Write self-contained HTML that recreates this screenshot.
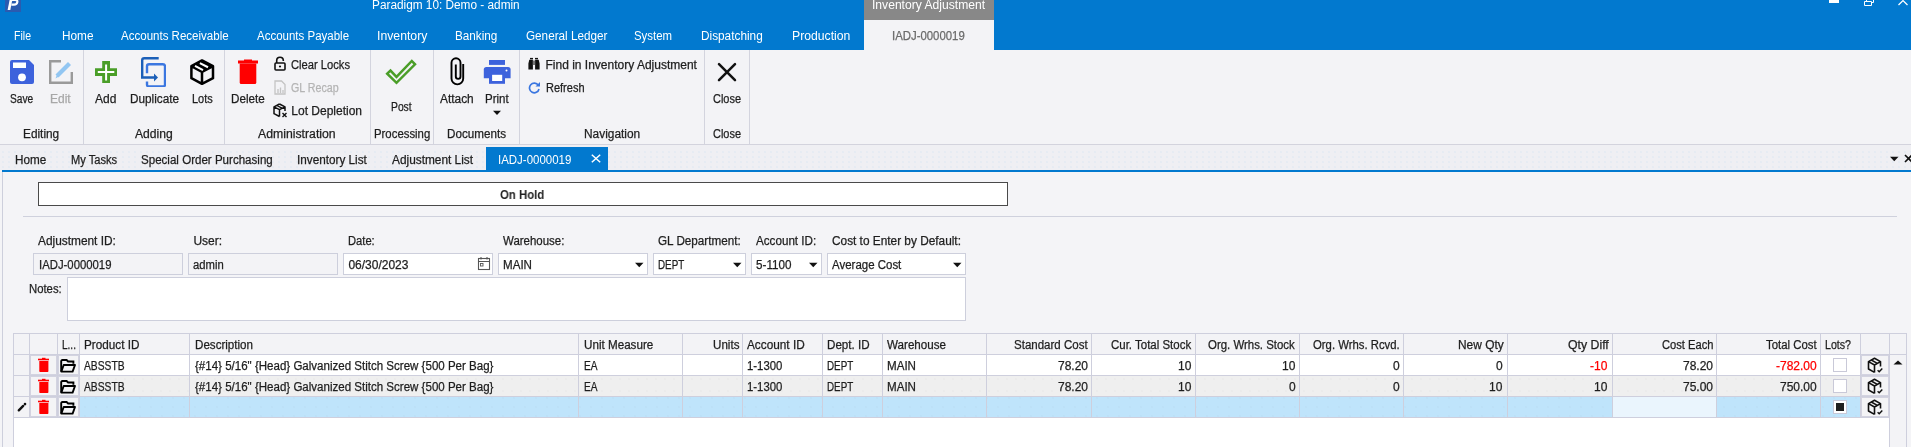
<!DOCTYPE html><html><head><meta charset="utf-8"><style>
html,body{margin:0;padding:0;width:1911px;height:447px;overflow:hidden;background:#f4f4f7;}
body{position:relative;font-family:"Liberation Sans",sans-serif;}
.t{position:absolute;font-size:12px;line-height:14px;white-space:nowrap;}
.t.d{-webkit-text-stroke:0.25px currentColor;}
#w{position:absolute;left:0;top:0;width:1911px;height:447px;overflow:hidden;will-change:transform;}
</style></head><body><div id="w">
<div style="position:absolute;left:0px;top:0px;width:1911px;height:50px;background:#0279cf"></div>
<div style="position:absolute;left:5px;top:0px;width:16px;height:12px;background:#2a5bb0"></div>
<svg style="position:absolute;left:5px;top:0px" width="16" height="12" viewBox="0 0 16 12"><path d="M2.6 10H5.3L7.3 0H4.6Z" fill="#fff"/><path d="M6 -0.2H10Q12.7 -0.2 12.3 2.1Q11.9 4.6 9 4.6H6.4" fill="none" stroke="#fff" stroke-width="2.2"/></svg>
<div class="t" style="left:371.80px;top:-2px;color:#fff;transform:scaleX(0.9840);transform-origin:0 0;">Paradigm 10: Demo - admin</div>
<div style="position:absolute;left:864px;top:0px;width:130px;height:20px;background:#888888"></div>
<div class="t" style="left:872.00px;top:-2px;color:#fff;transform:scaleX(1.0088);transform-origin:0 0;">Inventory Adjustment</div>
<div style="position:absolute;left:864px;top:20px;width:130px;height:30px;background:#f3f3f6"></div>
<div class="t d" style="left:892.00px;top:29px;color:#6b6b6b;transform:scaleX(0.9481);transform-origin:0 0;">IADJ-0000019</div>
<div style="position:absolute;left:1829px;top:0px;width:10px;height:3px;background:#fff"></div>
<svg style="position:absolute;left:1863px;top:0px" width="12" height="7" viewBox="0 0 12 7"><path d="M1.5 1.5h7v4h-7z M3.5 1.5V-1.5H10.5V2.5H8.5" fill="none" stroke="#fff" stroke-width="1"/></svg>
<svg style="position:absolute;left:1897px;top:0px" width="12" height="6" viewBox="0 0 12 6"><path d="M1.5 5L6 0.6L10.5 5" fill="none" stroke="#fff" stroke-width="1.3"/></svg>
<div class="t" style="left:14.40px;top:29px;color:#fff;transform:scaleX(0.8800);transform-origin:0 0;">File</div>
<div class="t" style="left:61.50px;top:29px;color:#fff;transform:scaleX(0.9844);transform-origin:0 0;">Home</div>
<div class="t" style="left:121.00px;top:29px;color:#fff;transform:scaleX(0.9607);transform-origin:0 0;">Accounts Receivable</div>
<div class="t" style="left:257.00px;top:29px;color:#fff;transform:scaleX(0.9583);transform-origin:0 0;">Accounts Payable</div>
<div class="t" style="left:377.00px;top:29px;color:#fff;transform:scaleX(1.0204);transform-origin:0 0;">Inventory</div>
<div class="t" style="left:455.00px;top:29px;color:#fff;transform:scaleX(0.9767);transform-origin:0 0;">Banking</div>
<div class="t" style="left:526.00px;top:29px;color:#fff;transform:scaleX(0.9759);transform-origin:0 0;">General Ledger</div>
<div class="t" style="left:634.00px;top:29px;color:#fff;transform:scaleX(0.9500);transform-origin:0 0;">System</div>
<div class="t" style="left:701.00px;top:29px;color:#fff;transform:scaleX(0.9841);transform-origin:0 0;">Dispatching</div>
<div class="t" style="left:792.00px;top:29px;color:#fff;transform:scaleX(1.0175);transform-origin:0 0;">Production</div>
<div style="position:absolute;left:0px;top:50px;width:1911px;height:95px;background:#f3f3f6"></div>
<div style="position:absolute;left:0px;top:144px;width:1911px;height:1px;background:#d3d3dd"></div>
<div style="position:absolute;left:83px;top:50px;width:1px;height:94px;background:#d3d4de"></div>
<div style="position:absolute;left:224px;top:50px;width:1px;height:94px;background:#d3d4de"></div>
<div style="position:absolute;left:370px;top:50px;width:1px;height:94px;background:#d3d4de"></div>
<div style="position:absolute;left:433px;top:50px;width:1px;height:94px;background:#d3d4de"></div>
<div style="position:absolute;left:519px;top:50px;width:1px;height:94px;background:#d3d4de"></div>
<div style="position:absolute;left:704px;top:50px;width:1px;height:94px;background:#d3d4de"></div>
<div style="position:absolute;left:749px;top:50px;width:1px;height:94px;background:#d3d4de"></div>
<svg style="position:absolute;left:10px;top:60px" width="24" height="24" viewBox="0 0 24 24"><path d="M2 0H19L24 5V22Q24 24 22 24H2Q0 24 0 22V2Q0 0 2 0Z" fill="#3d62dc"/><rect x="3" y="2.5" width="13" height="5.5" fill="#fff"/><circle cx="12" cy="17.3" r="3.9" fill="#fff"/></svg>
<svg style="position:absolute;left:49px;top:60px" width="24" height="24" viewBox="0 0 24 24"><path d="M12 1.2H1.2V22.8H22.8V12" fill="none" stroke="#9a9a9a" stroke-width="2.4"/><path d="M8 16L20.5 3.5" stroke="#92c6f2" stroke-width="4.2" fill="none"/><path d="M6.5 18.5L8 14.5L10 16.5Z" fill="#92c6f2"/></svg>
<svg style="position:absolute;left:95px;top:61px" width="22" height="22" viewBox="0 0 22 22"><path d="M7.2 0H15V7.2H22V15H15V22H7.2V15H0V7.2H7.2Z" fill="#4a9e28"/><path d="M11.1 3.4V19.5M2.8 11.1H19.3" stroke="#fff" stroke-width="2" fill="none"/></svg>
<svg style="position:absolute;left:140px;top:57px" width="26" height="30" viewBox="0 0 26 30"><path d="M18.7 1.2H4.2Q2.2 1.2 2.2 3.2V20.5H16" fill="none" stroke="#1b5fb8" stroke-width="2.4"/><path d="M14 16.5L18 20.5L14 24.5Z" fill="#1b5fb8"/><path d="M7 16.2V9.3Q7 7.2 9.1 7.2H22.9Q25 7.2 25 9.3V27.4Q25 29.5 22.9 29.5H9.1Q7 29.5 7 27.4V24.5" fill="none" stroke="#3a76e0" stroke-width="2.4"/></svg>
<svg style="position:absolute;left:190px;top:58px" width="25" height="28" viewBox="0 0 25 28"><path d="M12 2.4L23 8.2L12 14L1.4 8.2Z" fill="#000"/><path d="M12 2.4L23 8.2V20.2L12 25.8L1.4 20.2V8.2Z M1.4 8.2L12 14L23 8.2 M12 14V25.8" fill="none" stroke="#000" stroke-width="2.5" stroke-linejoin="round"/><path d="M5 7.9L13 12.1 M9.9 5.1L18 9.3" stroke="#fff" stroke-width="2.1"/></svg>
<svg style="position:absolute;left:238px;top:59px" width="20" height="26" viewBox="0 0 20 26"><rect x="6" y="0.5" width="8" height="2" fill="#ff0000"/><rect x="0" y="1.5" width="20" height="3" fill="#ff0000"/><path d="M1.7 4.5H18.3V23.5Q18.3 25 16.8 25H3.2Q1.7 25 1.7 23.5Z" fill="#ff0000"/></svg>
<svg style="position:absolute;left:274px;top:56px" width="12" height="15" viewBox="0 0 12 15"><path d="M2.7 7V4.5Q2.7 1.2 6 1.2Q9.3 1.2 9.3 4.5V5" fill="none" stroke="#111" stroke-width="1.6"/><rect x="1" y="7" width="10" height="7" rx="1" fill="none" stroke="#111" stroke-width="1.6"/><circle cx="6" cy="10.5" r="1.1" fill="#111"/></svg>
<svg style="position:absolute;left:274px;top:80px" width="12" height="15" viewBox="0 0 12 15"><path d="M1 1H7.5L11 4.5V14H1Z" fill="none" stroke="#c4c4c4" stroke-width="1.3"/><path d="M4 13V9M6.5 13V7.5M9 13V10" stroke="#c4c4c4" stroke-width="1.3"/></svg>
<svg style="position:absolute;left:273px;top:103px" width="15" height="15" viewBox="0 0 15 15"><path d="M6.5 1L12 3.8V8M6.5 13.5L1 10.7V3.8L6.5 1M1 3.8L6.5 6.6L12 3.8M6.5 6.6V13.5" fill="none" stroke="#111" stroke-width="1.5" stroke-linejoin="round"/><path d="M3.8 2.5L9 5.2" stroke="#111" stroke-width="1.4"/><path d="M9.5 10L13.5 14M13.5 10L9.5 14" stroke="#111" stroke-width="1.4"/></svg>
<svg style="position:absolute;left:385px;top:58px" width="33" height="28" viewBox="0 0 33 28"><path d="M2.2 15.7L5.5 12.6L11.5 18.9L26.8 3L30 6.3L11.5 24.8Z" fill="none" stroke="#4a9e28" stroke-width="2.5" stroke-linejoin="miter"/></svg>
<svg style="position:absolute;left:449px;top:57px" width="17" height="30" viewBox="0 0 17 30"><path d="M6.8 7.5V19.5A2.35 2.35 0 0 0 11.5 19.5V5.8A4.5 4.5 0 0 0 2.5 5.8V21.5A5.85 5.85 0 0 0 14.2 21.5V7" fill="none" stroke="#000" stroke-width="1.9"/></svg>
<svg style="position:absolute;left:483px;top:59px" width="28" height="26" viewBox="0 0 28 26"><rect x="6" y="1" width="16" height="4.9" fill="#3d62dc"/><path d="M0.8 10.5Q0.8 7.9 3.4 7.9H25Q27.6 7.9 27.6 10.5V19.2H0.8Z" fill="#3d62dc"/><rect x="6" y="14" width="16" height="10.8" fill="#3d62dc"/><rect x="9.1" y="15.8" width="10.1" height="6.2" fill="#fff"/><circle cx="23.5" cy="11.5" r="1" fill="#fff"/></svg>
<svg style="position:absolute;left:492px;top:110px" width="10" height="6" viewBox="0 0 10 6"><path d="M1 0.8H9L5 5Z" fill="#111"/></svg>
<svg style="position:absolute;left:528px;top:57px" width="12" height="13" viewBox="0 0 12 13"><rect x="2" y="0.9" width="3" height="1.4" fill="#111"/><rect x="7" y="0.9" width="3" height="1.4" fill="#111"/><path d="M1.3 2.8H4.9V12.6H0.4V6.5Z M7.1 2.8H10.7L11.6 6.5V12.6H7.1Z" fill="#111"/><rect x="4.9" y="3.5" width="2.2" height="4.5" fill="#777"/></svg>
<svg style="position:absolute;left:528px;top:81px" width="13" height="13" viewBox="0 0 13 13"><path d="M10.3 4.3A4.8 4.8 0 1 0 11 8" fill="none" stroke="#3a76e0" stroke-width="1.7"/><path d="M7.5 5.5H12V1Z" fill="#3a76e0"/></svg>
<svg style="position:absolute;left:716px;top:61px" width="22" height="22" viewBox="0 0 22 22"><path d="M3 3.2L19 19.2M19 3.2L3 19.2" stroke="#111" stroke-width="2.5" stroke-linecap="round"/></svg>
<div class="t d" style="left:10.30px;top:92px;color:#1e1e1e;transform:scaleX(0.8464);transform-origin:0 0;">Save</div>
<div class="t d" style="left:50.00px;top:92px;color:#a8a8a8;">Edit</div>
<div class="t d" style="left:95.00px;top:92px;color:#1e1e1e;">Add</div>
<div class="t d" style="left:129.50px;top:92px;color:#1e1e1e;transform:scaleX(0.9820);transform-origin:0 0;">Duplicate</div>
<div class="t d" style="left:191.50px;top:92px;color:#1e1e1e;transform:scaleX(0.9130);transform-origin:0 0;">Lots</div>
<div class="t d" style="left:231.00px;top:92px;color:#1e1e1e;transform:scaleX(0.9714);transform-origin:0 0;">Delete</div>
<div class="t d" style="left:291.30px;top:58px;color:#1e1e1e;transform:scaleX(0.9317);transform-origin:0 0;">Clear Locks</div>
<div class="t d" style="left:291.30px;top:81px;color:#b4b4b4;transform:scaleX(0.8889);transform-origin:0 0;">GL Recap</div>
<div class="t d" style="left:291.30px;top:104px;color:#1e1e1e;">Lot Depletion</div>
<div class="t d" style="left:390.80px;top:100px;color:#1e1e1e;transform:scaleX(0.8600);transform-origin:0 0;">Post</div>
<div class="t d" style="left:440.30px;top:92px;color:#1e1e1e;transform:scaleX(0.9912);transform-origin:0 0;">Attach</div>
<div class="t d" style="left:485.40px;top:92px;color:#1e1e1e;transform:scaleX(0.9600);transform-origin:0 0;">Print</div>
<div class="t d" style="left:545.50px;top:58px;color:#1e1e1e;">Find in Inventory Adjustment</div>
<div class="t d" style="left:545.50px;top:81px;color:#1e1e1e;transform:scaleX(0.9167);transform-origin:0 0;">Refresh</div>
<div class="t d" style="left:713.00px;top:92px;color:#1e1e1e;transform:scaleX(0.9129);transform-origin:0 0;">Close</div>
<div class="t d" style="left:23.00px;top:127px;color:#1e1e1e;transform:scaleX(0.9865);transform-origin:0 0;">Editing</div>
<div class="t d" style="left:134.60px;top:127px;color:#1e1e1e;transform:scaleX(1.0108);transform-origin:0 0;">Adding</div>
<div class="t d" style="left:258.00px;top:127px;color:#1e1e1e;transform:scaleX(1.0211);transform-origin:0 0;">Administration</div>
<div class="t d" style="left:373.60px;top:127px;color:#1e1e1e;transform:scaleX(0.9475);transform-origin:0 0;">Processing</div>
<div class="t d" style="left:446.70px;top:127px;color:#1e1e1e;transform:scaleX(0.9721);transform-origin:0 0;">Documents</div>
<div class="t d" style="left:583.50px;top:127px;color:#1e1e1e;transform:scaleX(0.9912);transform-origin:0 0;">Navigation</div>
<div class="t d" style="left:713.00px;top:127px;color:#1e1e1e;transform:scaleX(0.9129);transform-origin:0 0;">Close</div>
<div style="position:absolute;left:0px;top:145px;width:1911px;height:25px;background:#efeff3"></div>
<div style="position:absolute;left:0px;top:150px;width:1911px;height:19px;background:radial-gradient(circle at 1px 1px,#e2eaf2 0.6px,transparent 0.9px) 2px 1px/6px 5px"></div>
<div style="position:absolute;left:486px;top:147px;width:122px;height:23px;background:#0279cf"></div>
<div class="t d" style="left:14.60px;top:153px;color:#1e1e1e;transform:scaleX(0.9750);transform-origin:0 0;">Home</div>
<div class="t d" style="left:70.50px;top:153px;color:#1e1e1e;transform:scaleX(0.9260);transform-origin:0 0;">My Tasks</div>
<div class="t d" style="left:141.00px;top:153px;color:#1e1e1e;transform:scaleX(0.9635);transform-origin:0 0;">Special Order Purchasing</div>
<div class="t d" style="left:297.40px;top:153px;color:#1e1e1e;transform:scaleX(0.9778);transform-origin:0 0;">Inventory List</div>
<div class="t d" style="left:392.00px;top:153px;color:#1e1e1e;transform:scaleX(0.9880);transform-origin:0 0;">Adjustment List</div>
<div class="t" style="left:498.00px;top:153px;color:#fff;transform:scaleX(0.9558);transform-origin:0 0;">IADJ-0000019</div>
<svg style="position:absolute;left:591px;top:154px" width="10" height="9" viewBox="0 0 10 9"><path d="M0.8 0.8L9.2 8.2M9.2 0.8L0.8 8.2" stroke="#fff" stroke-width="1.5"/></svg>
<svg style="position:absolute;left:1890px;top:156px" width="9" height="6" viewBox="0 0 9 6"><path d="M0 0.8H8.5L4.25 5.2Z" fill="#111"/></svg>
<svg style="position:absolute;left:1904px;top:154px" width="7" height="9" viewBox="0 0 7 9"><path d="M1 1L8 8M8 1L1 8" stroke="#111" stroke-width="1.6"/></svg>
<div style="position:absolute;left:2px;top:170px;width:1909px;height:2px;background:#0279cf"></div>
<div style="position:absolute;left:2px;top:172px;width:1px;height:275px;background:#cdcfdc"></div>
<div style="position:absolute;left:38px;top:182px;width:968px;height:22px;background:#fff;border:1px solid #4a4a4a"></div>
<div class="t" style="left:500.40px;top:188px;color:#1e1e1e;font-weight:bold;transform:scaleX(0.9489);transform-origin:0 0;">On Hold</div>
<div style="position:absolute;left:23px;top:216px;width:1874px;height:1px;background:#cfd1dd"></div>
<div class="t d" style="left:38.40px;top:234px;color:#1e1e1e;transform:scaleX(0.9899);transform-origin:0 0;">Adjustment ID:</div>
<div class="t d" style="left:193.40px;top:234px;color:#1e1e1e;">User:</div>
<div class="t d" style="left:348.40px;top:234px;color:#1e1e1e;transform:scaleX(0.9310);transform-origin:0 0;">Date:</div>
<div class="t d" style="left:503.40px;top:234px;color:#1e1e1e;transform:scaleX(0.9547);transform-origin:0 0;">Warehouse:</div>
<div class="t d" style="left:658.40px;top:234px;color:#1e1e1e;transform:scaleX(0.9741);transform-origin:0 0;">GL Department:</div>
<div class="t d" style="left:756.40px;top:234px;color:#1e1e1e;transform:scaleX(0.9710);transform-origin:0 0;">Account ID:</div>
<div class="t d" style="left:832.10px;top:234px;color:#1e1e1e;transform:scaleX(0.9863);transform-origin:0 0;">Cost to Enter by Default:</div>
<div class="t d" style="left:28.60px;top:282px;color:#1e1e1e;transform:scaleX(0.9429);transform-origin:0 0;">Notes:</div>
<div style="position:absolute;left:33px;top:253px;width:148px;height:20px;background:#f3f3f6;border:1px solid #cdcfdc"></div>
<div style="position:absolute;left:188px;top:253px;width:148px;height:20px;background:#f3f3f6;border:1px solid #cdcfdc"></div>
<div style="position:absolute;left:343px;top:253px;width:148px;height:20px;background:#fff;border:1px solid #cdcfdc"></div>
<div style="position:absolute;left:498px;top:253px;width:148px;height:20px;background:#fff;border:1px solid #cdcfdc"></div>
<div style="position:absolute;left:653px;top:253px;width:91px;height:20px;background:#fff;border:1px solid #cdcfdc"></div>
<div style="position:absolute;left:751px;top:253px;width:69px;height:20px;background:#fff;border:1px solid #cdcfdc"></div>
<div style="position:absolute;left:827px;top:253px;width:137px;height:20px;background:#fff;border:1px solid #cdcfdc"></div>
<div style="position:absolute;left:67px;top:277px;width:897px;height:42px;background:#fff;border:1px solid #cdcfdc"></div>
<div class="t d" style="left:38.60px;top:258px;color:#1e1e1e;transform:scaleX(0.9442);transform-origin:0 0;">IADJ-0000019</div>
<div class="t d" style="left:193.40px;top:258px;color:#1e1e1e;transform:scaleX(0.9394);transform-origin:0 0;">admin</div>
<div class="t d" style="left:348.40px;top:258px;color:#1e1e1e;">06/30/2023</div>
<div class="t d" style="left:503.40px;top:258px;color:#1e1e1e;transform:scaleX(0.9667);transform-origin:0 0;">MAIN</div>
<div class="t d" style="left:658.40px;top:258px;color:#1e1e1e;transform:scaleX(0.8182);transform-origin:0 0;">DEPT</div>
<div class="t d" style="left:756.40px;top:258px;color:#1e1e1e;transform:scaleX(0.9730);transform-origin:0 0;">5-1100</div>
<div class="t d" style="left:832.10px;top:258px;color:#1e1e1e;transform:scaleX(0.9562);transform-origin:0 0;">Average Cost</div>
<svg style="position:absolute;left:477px;top:256px" width="14" height="15" viewBox="0 0 14 15"><rect x="1.5" y="2.5" width="11" height="11" fill="none" stroke="#555" stroke-width="1.1"/><path d="M1.5 5.5H12.5M4 1V3.5M10 1V3.5" stroke="#555" stroke-width="1.1"/><rect x="3.5" y="7.5" width="2.5" height="2.5" fill="none" stroke="#555" stroke-width="0.9"/></svg>
<svg style="position:absolute;left:635px;top:262px" width="9" height="6" viewBox="0 0 9 6"><path d="M0 0.8H8.5L4.25 5.2Z" fill="#111"/></svg>
<svg style="position:absolute;left:733px;top:262px" width="9" height="6" viewBox="0 0 9 6"><path d="M0 0.8H8.5L4.25 5.2Z" fill="#111"/></svg>
<svg style="position:absolute;left:809px;top:262px" width="9" height="6" viewBox="0 0 9 6"><path d="M0 0.8H8.5L4.25 5.2Z" fill="#111"/></svg>
<svg style="position:absolute;left:953px;top:262px" width="9" height="6" viewBox="0 0 9 6"><path d="M0 0.8H8.5L4.25 5.2Z" fill="#111"/></svg>
<div style="position:absolute;left:13px;top:333px;width:1894px;height:114px;background:#fff"></div>
<div style="position:absolute;left:13px;top:333px;width:1894px;height:1px;background:#cecfdd"></div>
<div style="position:absolute;left:13px;top:333px;width:1px;height:114px;background:#cecfdd"></div>
<div style="position:absolute;left:1906px;top:333px;width:1px;height:114px;background:#cecfdd"></div>
<div style="position:absolute;left:1890px;top:355px;width:16px;height:92px;background:#f3f3f6"></div>
<div style="position:absolute;left:14px;top:334px;width:1892px;height:20px;background:#f3f3f6"></div>
<div style="position:absolute;left:14px;top:355px;width:1875px;height:20px;background:#fff"></div>
<div style="position:absolute;left:14px;top:376px;width:1875px;height:20px;background:#efefef radial-gradient(circle at 1px 1px,#e3e3e3 0.5px,transparent 0.8px) 2px 2px/9px 12px"></div>
<div style="position:absolute;left:14px;top:397px;width:1875px;height:20px;background:#bfe4fb radial-gradient(circle at 1px 1px,#b8daf0 0.5px,transparent 0.8px) 4px 9px/11px 9px"></div>
<div style="position:absolute;left:14px;top:355px;width:15px;height:20px;background:#f3f3f6"></div>
<div style="position:absolute;left:14px;top:376px;width:15px;height:20px;background:#f3f3f6"></div>
<div style="position:absolute;left:14px;top:397px;width:15px;height:20px;background:#f3f3f6"></div>
<div style="position:absolute;left:1613px;top:397px;width:103px;height:20px;background:#eaf5fd"></div>
<div style="position:absolute;left:14px;top:354px;width:1892px;height:1px;background:#cecfdd"></div>
<div style="position:absolute;left:14px;top:375px;width:1875px;height:1px;background:#cecfdd"></div>
<div style="position:absolute;left:14px;top:396px;width:1875px;height:1px;background:#cecfdd"></div>
<div style="position:absolute;left:14px;top:417px;width:1875px;height:1px;background:#cecfdd"></div>
<div style="position:absolute;left:29px;top:334px;width:1px;height:84px;background:#cecfdd"></div>
<div style="position:absolute;left:57px;top:334px;width:1px;height:84px;background:#cecfdd"></div>
<div style="position:absolute;left:79px;top:334px;width:1px;height:84px;background:#cecfdd"></div>
<div style="position:absolute;left:189px;top:334px;width:1px;height:84px;background:#cecfdd"></div>
<div style="position:absolute;left:578px;top:334px;width:1px;height:84px;background:#cecfdd"></div>
<div style="position:absolute;left:682px;top:334px;width:1px;height:84px;background:#cecfdd"></div>
<div style="position:absolute;left:742px;top:334px;width:1px;height:84px;background:#cecfdd"></div>
<div style="position:absolute;left:822px;top:334px;width:1px;height:84px;background:#cecfdd"></div>
<div style="position:absolute;left:882px;top:334px;width:1px;height:84px;background:#cecfdd"></div>
<div style="position:absolute;left:986px;top:334px;width:1px;height:84px;background:#cecfdd"></div>
<div style="position:absolute;left:1091px;top:334px;width:1px;height:84px;background:#cecfdd"></div>
<div style="position:absolute;left:1195px;top:334px;width:1px;height:84px;background:#cecfdd"></div>
<div style="position:absolute;left:1299px;top:334px;width:1px;height:84px;background:#cecfdd"></div>
<div style="position:absolute;left:1403px;top:334px;width:1px;height:84px;background:#cecfdd"></div>
<div style="position:absolute;left:1507px;top:334px;width:1px;height:84px;background:#cecfdd"></div>
<div style="position:absolute;left:1612px;top:334px;width:1px;height:84px;background:#cecfdd"></div>
<div style="position:absolute;left:1716px;top:334px;width:1px;height:84px;background:#cecfdd"></div>
<div style="position:absolute;left:1820px;top:334px;width:1px;height:84px;background:#cecfdd"></div>
<div style="position:absolute;left:1860px;top:334px;width:1px;height:84px;background:#cecfdd"></div>
<div style="position:absolute;left:1889px;top:334px;width:1px;height:113px;background:#cecfdd"></div>
<div style="position:absolute;left:30px;top:355px;width:25px;height:18px;background:#f4f4f6;border:1px solid #d3d3e0"></div>
<div style="position:absolute;left:58px;top:355px;width:19px;height:18px;background:#f4f4f6;border:1px solid #d3d3e0"></div>
<div style="position:absolute;left:1861px;top:355px;width:26px;height:18px;background:#f4f4f6;border:1px solid #d3d3e0"></div>
<div style="position:absolute;left:30px;top:376px;width:25px;height:18px;background:#f4f4f6;border:1px solid #d3d3e0"></div>
<div style="position:absolute;left:58px;top:376px;width:19px;height:18px;background:#f4f4f6;border:1px solid #d3d3e0"></div>
<div style="position:absolute;left:1861px;top:376px;width:26px;height:18px;background:#f4f4f6;border:1px solid #d3d3e0"></div>
<div style="position:absolute;left:30px;top:397px;width:25px;height:18px;background:#f4f4f6;border:1px solid #d3d3e0"></div>
<div style="position:absolute;left:58px;top:397px;width:19px;height:18px;background:#f4f4f6;border:1px solid #d3d3e0"></div>
<div style="position:absolute;left:1861px;top:397px;width:26px;height:18px;background:#f4f4f6;border:1px solid #d3d3e0"></div>
<div class="t d" style="left:62.20px;top:338px;color:#1e1e1e;transform:scaleX(0.8353);transform-origin:0 0;">L...</div>
<div class="t d" style="left:84.00px;top:338px;color:#1e1e1e;transform:scaleX(0.9772);transform-origin:0 0;">Product ID</div>
<div class="t d" style="left:194.80px;top:338px;color:#1e1e1e;transform:scaleX(0.9667);transform-origin:0 0;">Description</div>
<div class="t d" style="left:583.50px;top:338px;color:#1e1e1e;transform:scaleX(0.9708);transform-origin:0 0;">Unit Measure</div>
<div class="t d" style="left:712.70px;top:338px;color:#1e1e1e;transform:scaleX(0.9667);transform-origin:0 0;">Units</div>
<div class="t d" style="left:747.20px;top:338px;color:#1e1e1e;transform:scaleX(0.9831);transform-origin:0 0;">Account ID</div>
<div class="t d" style="left:827.40px;top:338px;color:#1e1e1e;transform:scaleX(0.9682);transform-origin:0 0;">Dept. ID</div>
<div class="t d" style="left:887.10px;top:338px;color:#1e1e1e;transform:scaleX(0.9689);transform-origin:0 0;">Warehouse</div>
<div class="t d" style="left:1014.30px;top:338px;color:#1e1e1e;transform:scaleX(0.9597);transform-origin:0 0;">Standard Cost</div>
<div class="t d" style="left:1111.00px;top:338px;color:#1e1e1e;transform:scaleX(0.9565);transform-origin:0 0;">Cur. Total Stock</div>
<div class="t d" style="left:1208.30px;top:338px;color:#1e1e1e;transform:scaleX(0.9522);transform-origin:0 0;">Org. Wrhs. Stock</div>
<div class="t d" style="left:1313.10px;top:338px;color:#1e1e1e;transform:scaleX(0.9446);transform-origin:0 0;">Org. Wrhs. Rcvd.</div>
<div class="t d" style="left:1458.30px;top:338px;color:#1e1e1e;transform:scaleX(0.9935);transform-origin:0 0;">New Qty</div>
<div class="t d" style="left:1568.00px;top:338px;color:#1e1e1e;transform:scaleX(1.0250);transform-origin:0 0;">Qty Diff</div>
<div class="t d" style="left:1662.20px;top:338px;color:#1e1e1e;transform:scaleX(0.9309);transform-origin:0 0;">Cost Each</div>
<div class="t d" style="left:1765.50px;top:338px;color:#1e1e1e;transform:scaleX(0.9481);transform-origin:0 0;">Total Cost</div>
<div class="t d" style="left:1825.30px;top:338px;color:#1e1e1e;transform:scaleX(0.8867);transform-origin:0 0;">Lots?</div>
<div class="t d" style="left:84.00px;top:359px;color:#1e1e1e;transform:scaleX(0.8553);transform-origin:0 0;">ABSSTB</div>
<div class="t d" style="left:194.60px;top:359px;color:#1e1e1e;transform:scaleX(0.9613);transform-origin:0 0;">{#14} 5/16&quot; {Head} Galvanized Stitch Screw {500 Per Bag}</div>
<div class="t d" style="left:583.50px;top:359px;color:#1e1e1e;transform:scaleX(0.8438);transform-origin:0 0;">EA</div>
<div class="t d" style="left:747.20px;top:359px;color:#1e1e1e;transform:scaleX(0.9474);transform-origin:0 0;">1-1300</div>
<div class="t d" style="left:827.40px;top:359px;color:#1e1e1e;transform:scaleX(0.8182);transform-origin:0 0;">DEPT</div>
<div class="t d" style="left:887.10px;top:359px;color:#1e1e1e;transform:scaleX(0.9667);transform-origin:0 0;">MAIN</div>
<div class="t d" style="left:1058.00px;top:359px;color:#1e1e1e;">78.20</div>
<div class="t d" style="left:1178.00px;top:359px;color:#1e1e1e;">10</div>
<div class="t d" style="left:1282.00px;top:359px;color:#1e1e1e;">10</div>
<div class="t d" style="left:1393.00px;top:359px;color:#1e1e1e;">0</div>
<div class="t d" style="left:1496.00px;top:359px;color:#1e1e1e;">0</div>
<div class="t d" style="left:1590.00px;top:359px;color:#ff0000;">-10</div>
<div class="t d" style="left:1683.00px;top:359px;color:#1e1e1e;">78.20</div>
<div class="t d" style="left:1776.00px;top:359px;color:#ff0000;">-782.00</div>
<div class="t d" style="left:84.00px;top:380px;color:#1e1e1e;transform:scaleX(0.8553);transform-origin:0 0;">ABSSTB</div>
<div class="t d" style="left:194.60px;top:380px;color:#1e1e1e;transform:scaleX(0.9613);transform-origin:0 0;">{#14} 5/16&quot; {Head} Galvanized Stitch Screw {500 Per Bag}</div>
<div class="t d" style="left:583.50px;top:380px;color:#1e1e1e;transform:scaleX(0.8438);transform-origin:0 0;">EA</div>
<div class="t d" style="left:747.20px;top:380px;color:#1e1e1e;transform:scaleX(0.9474);transform-origin:0 0;">1-1300</div>
<div class="t d" style="left:827.40px;top:380px;color:#1e1e1e;transform:scaleX(0.8182);transform-origin:0 0;">DEPT</div>
<div class="t d" style="left:887.10px;top:380px;color:#1e1e1e;transform:scaleX(0.9667);transform-origin:0 0;">MAIN</div>
<div class="t d" style="left:1058.00px;top:380px;color:#1e1e1e;">78.20</div>
<div class="t d" style="left:1178.00px;top:380px;color:#1e1e1e;">10</div>
<div class="t d" style="left:1289.00px;top:380px;color:#1e1e1e;">0</div>
<div class="t d" style="left:1393.00px;top:380px;color:#1e1e1e;">0</div>
<div class="t d" style="left:1489.00px;top:380px;color:#1e1e1e;">10</div>
<div class="t d" style="left:1594.00px;top:380px;color:#1e1e1e;">10</div>
<div class="t d" style="left:1683.00px;top:380px;color:#1e1e1e;">75.00</div>
<div class="t d" style="left:1780.00px;top:380px;color:#1e1e1e;">750.00</div>
<svg style="position:absolute;left:38px;top:357px" width="12" height="16" viewBox="0 0 12 16"><rect x="4" y="0.8" width="3.5" height="1.4" fill="#ff0000"/><rect x="0" y="1.7" width="11" height="1.6" fill="#ff0000"/><path d="M1.3 3.9H10.4V14.3Q10.4 15 9.7 15H2Q1.3 15 1.3 14.3Z" fill="#ff0000"/></svg>
<svg style="position:absolute;left:60px;top:359px" width="16" height="14" viewBox="0 0 16 14"><path d="M1.2 12.5V2.2Q1.2 1 2.4 1H6.6L8.1 2.5H13.4V4.8" fill="none" stroke="#000" stroke-width="1.9"/><path d="M1.3 12.6L3.7 6H15L12.6 12.6Z" fill="none" stroke="#000" stroke-width="1.9" stroke-linejoin="round"/></svg>
<svg style="position:absolute;left:1867px;top:357px" width="17" height="17" viewBox="0 0 17 17"><path d="M13.5 9.5V4.6L7.5 1.2L1.5 4.6V12L7.5 15.4M1.5 4.6L7.5 8L13.5 4.6M7.5 8V15.4" fill="none" stroke="#111" stroke-width="1.6" stroke-linejoin="round"/><path d="M4.3 3L10.3 6.4" stroke="#111" stroke-width="1.5"/><path d="M10.6 13.3L12.2 14.8L15.3 11.6" fill="none" stroke="#111" stroke-width="1.4"/></svg>
<div style="position:absolute;left:1833px;top:358px;width:12px;height:12px;background:#fff;border:1px solid #c9c9d8"></div>
<svg style="position:absolute;left:38px;top:378px" width="12" height="16" viewBox="0 0 12 16"><rect x="4" y="0.8" width="3.5" height="1.4" fill="#ff0000"/><rect x="0" y="1.7" width="11" height="1.6" fill="#ff0000"/><path d="M1.3 3.9H10.4V14.3Q10.4 15 9.7 15H2Q1.3 15 1.3 14.3Z" fill="#ff0000"/></svg>
<svg style="position:absolute;left:60px;top:380px" width="16" height="14" viewBox="0 0 16 14"><path d="M1.2 12.5V2.2Q1.2 1 2.4 1H6.6L8.1 2.5H13.4V4.8" fill="none" stroke="#000" stroke-width="1.9"/><path d="M1.3 12.6L3.7 6H15L12.6 12.6Z" fill="none" stroke="#000" stroke-width="1.9" stroke-linejoin="round"/></svg>
<svg style="position:absolute;left:1867px;top:378px" width="17" height="17" viewBox="0 0 17 17"><path d="M13.5 9.5V4.6L7.5 1.2L1.5 4.6V12L7.5 15.4M1.5 4.6L7.5 8L13.5 4.6M7.5 8V15.4" fill="none" stroke="#111" stroke-width="1.6" stroke-linejoin="round"/><path d="M4.3 3L10.3 6.4" stroke="#111" stroke-width="1.5"/><path d="M10.6 13.3L12.2 14.8L15.3 11.6" fill="none" stroke="#111" stroke-width="1.4"/></svg>
<div style="position:absolute;left:1833px;top:379px;width:12px;height:12px;background:#fff;border:1px solid #c9c9d8"></div>
<svg style="position:absolute;left:38px;top:399px" width="12" height="16" viewBox="0 0 12 16"><rect x="4" y="0.8" width="3.5" height="1.4" fill="#ff0000"/><rect x="0" y="1.7" width="11" height="1.6" fill="#ff0000"/><path d="M1.3 3.9H10.4V14.3Q10.4 15 9.7 15H2Q1.3 15 1.3 14.3Z" fill="#ff0000"/></svg>
<svg style="position:absolute;left:60px;top:401px" width="16" height="14" viewBox="0 0 16 14"><path d="M1.2 12.5V2.2Q1.2 1 2.4 1H6.6L8.1 2.5H13.4V4.8" fill="none" stroke="#000" stroke-width="1.9"/><path d="M1.3 12.6L3.7 6H15L12.6 12.6Z" fill="none" stroke="#000" stroke-width="1.9" stroke-linejoin="round"/></svg>
<svg style="position:absolute;left:1867px;top:399px" width="17" height="17" viewBox="0 0 17 17"><path d="M13.5 9.5V4.6L7.5 1.2L1.5 4.6V12L7.5 15.4M1.5 4.6L7.5 8L13.5 4.6M7.5 8V15.4" fill="none" stroke="#111" stroke-width="1.6" stroke-linejoin="round"/><path d="M4.3 3L10.3 6.4" stroke="#111" stroke-width="1.5"/><path d="M10.6 13.3L12.2 14.8L15.3 11.6" fill="none" stroke="#111" stroke-width="1.4"/></svg>
<div style="position:absolute;left:1833px;top:400px;width:12px;height:12px;background:#fff;border:1px solid #c9c9d8"></div>
<div style="position:absolute;left:1836px;top:403px;width:8px;height:8px;background:#1e1e1e"></div>
<svg style="position:absolute;left:17px;top:402px" width="10" height="10" viewBox="0 0 10 10"><path d="M1.8 8.3L6.2 3.9" stroke="#111" stroke-width="2.4" stroke-linecap="round"/><circle cx="8" cy="2.1" r="1.3" fill="#111"/></svg>
<svg style="position:absolute;left:1893px;top:360px" width="10" height="5" viewBox="0 0 10 5"><path d="M0.5 4.5H9.5L5 0.5Z" fill="#111"/></svg>
</div></body></html>
